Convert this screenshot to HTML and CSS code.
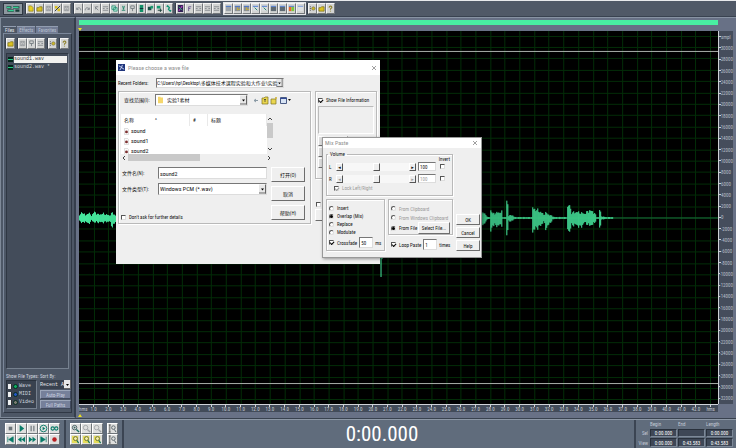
FILE: index.html
```html
<!DOCTYPE html>
<html lang="en">
<head>
<meta charset="utf-8">
<title>Wave editor</title>
<link rel="stylesheet" href="styles.css">
</head>
<body>
<svg class="defs" aria-hidden="true">
  <symbol id="wave" viewBox="0 0 18 10"><path d="M1 3h6M9 3h8M2 7h8M12 7h5" stroke="#163c36" stroke-width="3"/><path d="M1 3h5M9 3h7M3 7h7" stroke="#35cf92" stroke-width="1.5"/></symbol>
  <symbol id="new" viewBox="0 0 8 8"><path d="M2 1h3l2 2v4H2z" fill="#e6cf26" stroke="#8a7a10" stroke-width=".7"/></symbol>
  <symbol id="open" viewBox="0 0 8 8"><path d="M1 3h2l1-1h3v5H1z" fill="#d9c022" stroke="#6d6212" stroke-width=".7"/></symbol>
  <symbol id="save" viewBox="0 0 8 8"><path d="M1.5 1.5h5v5h-5zM3 1.5v2h2v-2M3 6.500v-1.500h2v1.500" fill="none" stroke="#8b8f93" stroke-width=".8"/></symbol>
  <symbol id="saveas" viewBox="0 0 8 8"><path d="M1 1h3v3H1zM4 4h3v3H4z" fill="#d9c022"/><path d="M1 7l6-6" stroke="#222b33"/></symbol>
  <symbol id="undo" viewBox="0 0 8 8"><path d="M2 3v2h2M2 5c1-3 5-2 4.500 1" fill="none" stroke="#777e85"/></symbol>
  <symbol id="redo" viewBox="0 0 8 8"><path d="M6 3v2H4M6 5C5 2 1 3 1.500 6" fill="none" stroke="#777e85"/></symbol>
  <symbol id="cutg" viewBox="0 0 8 8"><path d="M2 2l4 4M6 2h-3v3" fill="none" stroke="#7b8187"/></symbol>
  <symbol id="repeat" viewBox="0 0 8 8"><path d="M1 2h6M1 4h2M5 4h2M1 6h6" stroke="#81878b"/></symbol>
  <symbol id="copy" viewBox="0 0 8 8"><path d="M1 1h4v4H1zM3 3h4v4H3z" fill="#b8e8d4" stroke="#16876b" stroke-width=".8"/></symbol>
  <symbol id="cut" viewBox="0 0 8 8"><path d="M3 1l1 4M5 1L4 5M2 6h4" stroke="#168064"/></symbol>
  <symbol id="paste" viewBox="0 0 8 8"><path d="M2 1h4v3H2zM4 4v3" fill="none" stroke="#747c80"/></symbol>
  <symbol id="mix" viewBox="0 0 8 8"><path d="M2 0h4v8H2z" fill="#149168"/><path d="M2 4h4" stroke="#123"/></symbol>
  <symbol id="trim" viewBox="0 0 8 8"><path d="M1 2h4v4H1z" fill="#1a5047"/><path d="M4 1h3v3H4z" fill="#1a9b70"/></symbol>
  <symbol id="convert" viewBox="0 0 8 8"><path d="M1 1h4v3H1z" fill="#159a70"/><path d="M2 6h5M5 4v4" stroke="#173b34"/></symbol>
  <symbol id="link" viewBox="0 0 8 8"><path d="M2 2l1-1 2 2-1 2 2 2 1-1" fill="none" stroke="#119173" stroke-width="1.500"/></symbol>
  <symbol id="spectral" viewBox="0 0 8 8"><path d="M1 0h6v8H1z" fill="#342057"/><path d="M2 7l4-6" stroke="#e24ae2"/><path d="M2 2l4 4" stroke="#28b670"/></symbol>
  <symbol id="fx" viewBox="0 0 8 8"><path d="M3 7V2h3M3 4h2" fill="none" stroke="#6b568e"/></symbol>
  <symbol id="win" viewBox="0 0 8 8"><path d="M1 1h6v6H1z" fill="#9da3a9"/><path d="M1 1.500h6" stroke="#3b6fd2"/></symbol>
  <symbol id="winy" viewBox="0 0 8 8"><path d="M1 1h6v6H1z" fill="#8b9097"/><path d="M1 1.500h6" stroke="#3b6fd2"/><path d="M4 3v3M5 5h2" stroke="#c9b12a"/></symbol>
  <symbol id="wing" viewBox="0 0 8 8"><path d="M1 1h6v6H1z" fill="#d9dcdf"/><path d="M1 1.500h6" stroke="#3b6fd2"/><path d="M3 3l3 3" stroke="#168064"/></symbol>
  <symbol id="wink" viewBox="0 0 8 8"><path d="M1 2h6v5H1z" fill="#5f6a73"/><path d="M1 1.500h6" stroke="#3b6fd2"/></symbol>
  <symbol id="winc" viewBox="0 0 8 8"><path d="M1 2h3v5H1z" fill="#e8662c"/><path d="M4 2h3v5H4z" fill="#7cc93c"/><path d="M1 1.500h6" stroke="#3b6fd2"/></symbol>
  <symbol id="blank" viewBox="0 0 8 8"><path d="M1 1h6v6H1z" fill="#dfe1e3"/><path d="M1 1.500h6" stroke="#6f94da"/></symbol>
  <symbol id="opts" viewBox="0 0 8 8"><path d="M1 2h1M1 4h1M1 6h1" stroke="#333"/><circle cx="5" cy="4" r="2" fill="#c9b62b" stroke="#555" stroke-width=".5"/></symbol>
  <symbol id="help" viewBox="0 0 8 8"><path d="M2.500 3c0-2.500 3.500-2 3 0L4 4.500v1M4 6.500v1" fill="none" stroke="#8f812a" stroke-width="1.200"/></symbol>
  <symbol id="stop" viewBox="0 0 10 10"><path d="M3 3h4v4H3z" fill="#6b7478"/></symbol>
  <symbol id="play" viewBox="0 0 10 10"><path d="M3 1v8l5-4z" fill="#087b68"/></symbol>
  <symbol id="pause" viewBox="0 0 10 10"><path d="M3.500 2v6M6.500 2v6" stroke="#7b8388" stroke-width="1.500"/></symbol>
  <symbol id="playall" viewBox="0 0 10 10"><circle cx="5" cy="5" r="3.700" fill="none" stroke="#087b68"/><path d="M4 3v4l3-2z" fill="#087b68"/></symbol>
  <symbol id="loop" viewBox="0 0 10 10"><circle cx="3" cy="5" r="1.800" fill="none" stroke="#087b68" stroke-width="1.200"/><circle cx="7" cy="5" r="1.800" fill="none" stroke="#087b68" stroke-width="1.200"/></symbol>
  <symbol id="first" viewBox="0 0 10 10"><path d="M2 2v6M8 2v6L3 5z" fill="#087b68" stroke="#087b68" stroke-width=".8"/></symbol>
  <symbol id="rew" viewBox="0 0 10 10"><path d="M5 2v6L1 5zM9 2v6L5 5z" fill="#087b68"/></symbol>
  <symbol id="fwd" viewBox="0 0 10 10"><path d="M1 2v6l4-3zM5 2v6l4-3z" fill="#087b68"/></symbol>
  <symbol id="last" viewBox="0 0 10 10"><path d="M8 2v6M2 2v6l5-3z" fill="#087b68" stroke="#087b68" stroke-width=".8"/></symbol>
  <symbol id="rec" viewBox="0 0 10 10"><circle cx="5" cy="5" r="2.500" fill="#b91f22"/></symbol>
  <symbol id="zoomin" viewBox="0 0 10 10"><circle cx="4" cy="4" r="2.500" fill="#c8e4e0" stroke="#4f5a60"/><path d="M6 6l3 3" stroke="#14705d" stroke-width="1.500"/><path d="M3 4h2M4 3v2" stroke="#333" stroke-width=".7"/></symbol>
  <symbol id="zoomoff" viewBox="0 0 10 10"><circle cx="4" cy="4" r="2.500" fill="none" stroke="#a0a4a7"/><path d="M6 6l3 3" stroke="#a0a4a7" stroke-width="1.500"/></symbol>
  <symbol id="zoomsel" viewBox="0 0 10 10"><path d="M1 1h7v8H1z" fill="#e5dd59"/><circle cx="5" cy="4" r="2.200" fill="#f5f0a6" stroke="#65682c"/><path d="M6.500 6l2 3" stroke="#14705d" stroke-width="1.300"/></symbol>
  <symbol id="zoomv" viewBox="0 0 10 10"><path d="M2 1v8M1 1h2M1 9h2" stroke="#333" stroke-width=".8"/><circle cx="6" cy="4" r="2" fill="none" stroke="#59646a"/><path d="M7 6l2 3" stroke="#4b5960"/></symbol>
  <symbol id="file" viewBox="0 0 6 8"><path d="M.5.5h4l1 1v6h-5z" fill="#fff" stroke="#aaa" stroke-width=".5"/><circle cx="3" cy="4.500" r="1.700" fill="#7d3131"/></symbol>
</svg>

<div class="app">
  <header class="toolbar">
    <span class="brand"><svg><use href="#wave"/></svg></span>
    <div class="tools"><button aria-label="New"><svg><use href="#new"/></svg></button><button aria-label="Open"><svg><use href="#open"/></svg></button><button aria-label="Save"><svg><use href="#save"/></svg></button><button aria-label="Save as"><svg><use href="#saveas"/></svg></button><button aria-label="Save copy"><svg><use href="#save"/></svg></button></div>
    <div class="tools"><button aria-label="Undo"><svg><use href="#undo"/></svg></button><button aria-label="Redo"><svg><use href="#redo"/></svg></button><button aria-label="Clear"><svg><use href="#cutg"/></svg></button><button aria-label="Repeat"><svg><use href="#repeat"/></svg></button><button aria-label="Copy"><svg><use href="#copy"/></svg></button><button aria-label="Cut"><svg><use href="#cut"/></svg></button><button aria-label="Paste"><svg><use href="#paste"/></svg></button><button aria-label="Mix"><svg><use href="#mix"/></svg></button><button aria-label="Trim"><svg><use href="#trim"/></svg></button><button aria-label="Convert"><svg><use href="#convert"/></svg></button><button aria-label="Link"><svg><use href="#link"/></svg></button></div>
    <div class="tools"><button aria-label="Spectral view"><svg><use href="#spectral"/></svg></button><button aria-label="Effect"><svg><use href="#fx"/></svg></button><button aria-label="Cue list"><svg><use href="#repeat"/></svg></button><button aria-label="Play list"><svg><use href="#repeat"/></svg></button><button aria-label="Info"><svg><use href="#repeat"/></svg></button></div>
    <div class="tools framed"><button aria-label="Organizer"><svg><use href="#win"/></svg></button><button aria-label="Levels"><svg><use href="#winy"/></svg></button><button aria-label="Frequency"><svg><use href="#winy"/></svg></button><button aria-label="Transport"><svg><use href="#wing"/></svg></button><button aria-label="Zoom"><svg><use href="#wing"/></svg></button><button aria-label="Time"><svg><use href="#wink"/></svg></button><button aria-label="Meters"><svg><use href="#wink"/></svg></button><button aria-label="Colours"><svg><use href="#winc"/></svg></button><button aria-label="Blank"><svg><use href="#blank"/></svg></button></div>
    <div class="tools"><button aria-label="Settings"><svg><use href="#opts"/></svg></button><button aria-label="Scripts"><svg><use href="#open"/></svg></button><button aria-label="Help"><svg><use href="#help"/></svg></button></div>
  </header>

  <div class="workspace">
    <aside class="organizer">
      <nav class="tabs"><button class="on">Files</button><button>Effects</button><button>Favorites</button></nav>
      <div class="panel">
        <div class="paneltools">
          <div class="tools"><button aria-label="Open file"><svg><use href="#open"/></svg></button></div>
          <div class="tools"><button aria-label="Close file"><svg><use href="#save"/></svg></button><button aria-label="Insert"><svg><use href="#paste"/></svg></button><button aria-label="Edit"><svg><use href="#repeat"/></svg></button></div>
          <div class="tools"><button aria-label="Options"><svg><use href="#opts"/></svg></button></div>
          <div class="tools"><button aria-label="Panel help"><svg><use href="#help"/></svg></button></div>
        </div>
        <ul class="files">
          <li><i></i><span class="sel">sound1.wav</span></li>
          <li><i></i><span>sound2.wav *</span></li>
        </ul>
        <div class="filters">
          <div class="col">
            <span class="cap">Show File Types:</span>
            <div class="types">
              <label><input type="checkbox" checked><i class="dot"></i>Wave</label>
              <label><input type="checkbox" checked><i class="dot midi"></i>MIDI</label>
              <label><input type="checkbox" checked><i class="dot video"></i>Video</label>
            </div>
          </div>
          <div class="col">
            <label class="cap" for="sort">Sort By:</label>
            <select id="sort"><option>Recent Acc</option></select>
            <button class="flat">Auto-Play</button>
            <button class="flat">Full Paths</button>
          </div>
        </div>
      </div>
    </aside>

    <main class="editor">
      <div class="overview"></div>
      <div class="cue"><i></i></div>
      <div class="canvas">
        <svg id="plot" viewBox="0 0 640 374" preserveAspectRatio="none"></svg>
        <div class="levels" id="levels"></div>
      </div>
      <div class="times" id="times"></div>
      <div class="cue foot"><i></i></div>
    </main>
  </div>

  <footer class="bottom">
    <div class="pad transport">
      <button aria-label="Stop"><svg><use href="#stop"/></svg></button><button aria-label="Play"><svg><use href="#play"/></svg></button><button aria-label="Pause"><svg><use href="#pause"/></svg></button><button aria-label="Play to end"><svg><use href="#playall"/></svg></button><button aria-label="Loop"><svg><use href="#loop"/></svg></button>
      <button aria-label="Go to start"><svg><use href="#first"/></svg></button><button aria-label="Rewind"><svg><use href="#rew"/></svg></button><button aria-label="Fast forward"><svg><use href="#fwd"/></svg></button><button aria-label="Go to end"><svg><use href="#last"/></svg></button><button aria-label="Record"><svg><use href="#rec"/></svg></button>
    </div>
    <div class="zooms">
      <div class="pad three">
        <button aria-label="Zoom in"><svg><use href="#zoomin"/></svg></button><button aria-label="Zoom out"><svg><use href="#zoomoff"/></svg></button><button aria-label="Zoom full"><svg><use href="#zoomoff"/></svg></button>
        <button aria-label="Zoom selection"><svg><use href="#zoomsel"/></svg></button><button aria-label="Zoom left"><svg><use href="#zoomsel"/></svg></button><button aria-label="Zoom right"><svg><use href="#zoomsel"/></svg></button>
      </div>
      <div class="pad one"><button aria-label="Vertical zoom in"><svg><use href="#zoomv"/></svg></button><button aria-label="Vertical zoom out"><svg><use href="#zoomv"/></svg></button></div>
    </div>
    <div class="clock">0:00.000</div>
    <table class="range">
      <tr><th></th><th>Begin</th><th>End</th><th>Length</th></tr>
      <tr><th>Sel</th><td>0:00.000</td><td></td><td>0:00.000</td></tr>
      <tr><th>View</th><td>0:00.000</td><td>0:43.583</td><td>0:43.583</td></tr>
    </table>
  </footer>
</div>

<section class="window chooser">
  <header><svg class="appicon" viewBox="0 0 8 8"><path d="M0 0h8v8H0z" fill="#20357c"/><path d="M1 2l3 2-2 3M5 1l-1 3 3 2" fill="none" stroke="#dfe8ff"/></svg><h2>Please choose a wave file</h2><button class="close" aria-label="Close chooser"><svg viewBox="0 0 6 6"><path d="M1 1l4 4M5 1L1 5" stroke="#888" stroke-width=".8"/></svg></button></header>
  <div class="content">
    <div class="recent"><label for="recent">Recent Folders:</label><select id="recent"><option>C:\Users\hp\Desktop\多媒体技术课程实验和大作业\实验</option></select></div>
    <div class="cols">
      <div class="group pick">
        <div class="lookin"><label for="look">查找范围(I):</label>
          <div class="folderbox"><svg viewBox="0 0 6 8"><path d="M0 0h3v1h3v7H0z" fill="#f5d66b"/></svg><select id="look"><option>实验1素材</option></select></div>
          <svg class="navicons" viewBox="0 0 38 9"><path d="M1 4.500h4M3 3L1 4.500 3 6" fill="none" stroke="#8a9aa5"/><path d="M9 2h2l1-1h3v7H9z" fill="#ead64f" stroke="#807320" stroke-width=".7"/><path d="M12 3v3M11 4l1-1 1 1" fill="none" stroke="#333" stroke-width=".7"/><path d="M18 3h5v5h-5z" fill="#ead64f" stroke="#807320" stroke-width=".7"/><path d="M22 1l2 2M24 1l-2 2" stroke="#caa820" stroke-width=".7"/><path d="M27.500 1.500h6v6h-6z" fill="#d8e4f4" stroke="#4a5b84"/><path d="M27 2.500h7" stroke="#334b96"/><path d="M35 3h3l-1.500 2z" fill="#111"/></svg>
        </div>
        <div class="listing">
          <div class="scrollarea">
            <table><tr><th>名称<b>^</b></th><th>#</th><th>标题</th></tr>
              <tr><td><svg><use href="#file"/></svg>sound</td><td></td><td></td></tr>
              <tr><td><svg><use href="#file"/></svg>sound1</td><td></td><td></td></tr>
              <tr><td><svg><use href="#file"/></svg>sound2</td><td></td><td></td></tr></table>
            <div class="vbar"><svg viewBox="0 0 6 4"><path d="M1 3l2-2 2 2" fill="none" stroke="#444"/></svg><i></i><svg class="dn" viewBox="0 0 6 4"><path d="M1 1l2 2 2-2" fill="none" stroke="#444"/></svg></div>
          </div>
          <div class="hbar"><svg viewBox="0 0 4 6"><path d="M3 1L1 3l2 2" fill="none" stroke="#444"/></svg><i></i><svg viewBox="0 0 4 6"><path d="M1 1l2 2-2 2" fill="none" stroke="#444"/></svg></div>
        </div>
        <div class="entry">
          <div class="fields">
            <div><label for="fname">文件名(N):</label><input id="fname" type="text" value="sound2"></div>
            <div><label for="ftype">文件类型(T):</label><select id="ftype"><option>Windows PCM (*.wav)</option></select></div>
            <label class="check ask"><input type="checkbox">Don't ask for further details</label>
          </div>
          <div class="actions"><button class="btn">打开(O)</button><button class="btn">取消</button><button class="btn">帮助(H)</button></div>
        </div>
      </div>
      <div class="side">
        <div class="group info"><label class="check"><input type="checkbox" checked>Show File Information</label><div class="sunken"></div><button class="btn" aria-label="Play"></button><button class="btn" aria-label="Stop"></button><button class="btn" aria-label="Loop"></button></div>
        <label class="check auto"><input type="checkbox" aria-label="Auto play"></label>
        <button class="btn" aria-label="Preview"></button>
      </div>
    </div>
  </div>
</section>

<section class="window mix">
  <header><h2>Mix Paste</h2><button class="close" aria-label="Close mix"><svg viewBox="0 0 6 6"><path d="M1 1l4 4M5 1L1 5" stroke="#888" stroke-width=".8"/></svg></button></header>
  <div class="mixbody">
    <div class="settings">
      <fieldset class="group volume"><legend>Volume</legend>
        <span class="invert">Invert</span>
        <div class="vol"><label for="vl">L</label><div class="slider"><button aria-label="Left down">◂</button><input type="range" aria-label="Left volume"><button aria-label="Left up">▸</button></div><input id="vl" type="text" value="100"><input type="checkbox" aria-label="Invert left"></div>
        <div class="vol"><label for="vr">R</label><div class="slider off"><button aria-label="Right down">◂</button><input type="range" aria-label="Right volume"><button aria-label="Right up">▸</button></div><input id="vr" class="off" type="text" value="100"><input type="checkbox" aria-label="Invert right"></div>
        <label class="check off"><input type="checkbox" checked disabled>Lock Left/Right</label>
      </fieldset>
      <div class="lower">
        <div class="group modes">
          <label class="check"><input type="radio" name="mode">Insert</label>
          <label class="check"><input type="radio" name="mode" checked>Overlap (Mix)</label>
          <label class="check"><input type="radio" name="mode">Replace</label>
          <label class="check"><input type="radio" name="mode">Modulate</label>
          <div class="fade"><label class="check"><input type="checkbox" checked>Crossfade</label><input type="text" value="50" aria-label="Crossfade time"><span>ms</span></div>
        </div>
        <div class="from">
          <div class="group sources">
            <label class="check off"><input type="radio" name="src" disabled>From Clipboard</label>
            <label class="check off"><input type="radio" name="src" disabled>From Windows Clipboard</label>
            <div class="fromfile"><label class="check"><input type="radio" name="src" checked>From File</label><button class="btn">Select File...</button></div>
          </div>
          <div class="fade"><label class="check"><input type="checkbox" checked>Loop Paste</label><input type="text" value="1" aria-label="Loop count"><span>times</span></div>
        </div>
      </div>
    </div>
    <div class="mixactions"><button class="btn">OK</button><button class="btn">Cancel</button><button class="btn">Help</button></div>
  </div>
</section>
<script src="script.js"></script>
</body>
</html>
```
FILE: styles.css
```css
* { box-sizing: border-box; }
body { margin: 0; font: 5px/6px "Liberation Sans Narrow", "Roboto Condensed", "Liberation Sans", "Noto Sans CJK SC", sans-serif; color: #111; background: #4f5865; }
button, input, select { font: inherit; color: inherit; margin: 0; padding: 0; border: 0; border-radius: 0; background: none; min-width: 0; }
svg { display: block; }
.defs { position: absolute; width: 0; height: 0; }
.app { display: flex; flex-direction: column; height: 100vh; }

.toolbar { display: flex; align-items: center; gap: 3px; height: 17px; padding: 0 3px; border-top: 1px solid #e8eaec; border-bottom: 1px solid #394250; background: #505967; }
.brand { width: 20px; height: 12px; padding: 1px; border: 1px solid #2f3842; background: #8d979f; }
.brand svg { width: 100%; height: 100%; }
.tools { display: flex; box-shadow: -1px 0 #363e4a; }
.tools button { width: 9px; height: 11px; padding: 1px 0; background: #d3d4d3; border: 1px solid; border-color: #f4f4f4 #73777b #73777b #f4f4f4; }
.framed { box-shadow: 0 0 0 1px #e3e5e8; }
.tools svg { width: 7px; height: 7px; }

.workspace { display: flex; flex: 1; min-height: 0; border-bottom: 1px solid #38414e; }
.organizer { display: flex; flex-direction: column; width: 76px; padding: 8px 2px 4px; border: 1px solid #7e8998; border-right: 2px solid #353e4c; background: #4d5766; }
.tabs { display: flex; gap: 1px; }
.tabs button { height: 7px; padding: 0 2px; color: #b9c2d0; background: #717b93; border-top: 1px solid #929db0; }
.tabs .on { color: #e5e9ef; background: #4d5766; }
.panel { display: flex; flex-direction: column; flex: 1; padding: 4px 2px 3px; border: 1px solid #7b879a; border-right-color: #303845; border-bottom-color: #303845; }
.paneltools { display: flex; gap: 3px; margin-bottom: 4px; }
.files { flex: 1; list-style: none; margin: 0; padding: 1px; border: 1px solid; border-color: #2f3743 #76818f #76818f #2f3743; background: #434c5a; color: #d5d9de; font: 5px/7px "Liberation Mono", monospace; }
.files li { display: flex; align-items: center; gap: 1px; height: 8px; }
.files i { width: 5px; height: 5px; background: linear-gradient(#06261d 40%, #27c781 40% 60%, #06261d 60%); }
.files span { flex: 1; }
.files .sel { background: #f1f1ef; color: #333; }
.filters { display: flex; gap: 3px; color: #ced5df; padding-top: 4px; }
.col { display: flex; flex-direction: column; gap: 1px; width: 31px; }
.cap { display: block; height: 6px; white-space: nowrap; }
.types { height: 29px; padding: 1px; border: 1px solid; border-color: #29313c #76818f #76818f #29313c; background: #39424f; }
.types label { display: flex; align-items: center; gap: 1px; height: 8px; font-family: "Liberation Mono", monospace; }
.types input { appearance: none; width: 4px; height: 5px; background: #eef0f1; border-right: 1px solid #333; }
.dot { width: 5px; height: 5px; border-radius: 50%; background: #0fae60; border: 1px solid #082f22; }
.midi { background: #2355c4; }
.video { background: #7c7c74; }
select { appearance: none; background: #fff url("data:image/svg+xml,%3Csvg xmlns='http://www.w3.org/2000/svg' viewBox='0 0 7 9'%3E%3Cpath d='M0 0h7v9H0z' fill='%23e8e8e8'/%3E%3Cpath d='M6.500 0v9M0 8.500h7' stroke='%23666'/%3E%3Cpath d='M2 4h3L3.500 6z'/%3E%3C/svg%3E") right center / 7px 100% no-repeat; }
#sort { height: 9px; color: #e7eaee; padding-right: 7px; background-color: #39424f; font-family: "Liberation Mono", monospace; }
.flat { height: 9px; color: #ccd2e0; background: #76809a; border: 1px solid; border-color: #9ca6ba #414a5e #414a5e #9ca6ba; line-height: 6px; }

.editor { display: flex; flex-direction: column; flex: 1; min-width: 0; padding: 2px 3px 0; background: #687186; border-top: 1px solid #8893a3; }
.overview { height: 5px; margin-right: 15px; background: #49efa2; }
.cue { height: 6px; display: flex; align-items: end; }
.cue i { border: 2px solid transparent; border-top: 3px solid #ece01e; border-bottom: 0; margin-left: -1px; }
.canvas { display: flex; flex: 1; min-height: 0; }
#plot { flex: 1; min-width: 0; height: 100%; background: #000; }
.levels { display: flex; flex-direction: column; width: 15px; background: #454d5c; border-left: 1px solid #cdd1d6; color: #b8bec8; }
.levels span { flex: 1; display: flex; align-items: center; min-height: 0; }
.levels span::before { content: ""; width: 2px; height: 1px; background: #cdd1d6; }
.times { display: grid; height: 8px; margin-right: 15px; grid-template-columns: 1fr repeat(42, 2fr) 2fr; background: #424b59; border-top: 1px solid #cfd3d8; color: #c6cbd3; text-align: center; }
.times span { min-width: 0; padding-top: 1px; background: linear-gradient(#cfd3d8, #cfd3d8) center top / 1px 2px no-repeat; }
.times span:first-child { background: none; }
.foot { align-items: center; }
.foot i { border-top: 0; border-bottom: 3px solid #ece01e; }

.bottom { display: flex; height: 29px; border-top: 1px solid #8d98a6; background: #606c7c; }
.pad { display: grid; grid-template-columns: repeat(5, 11px); grid-auto-rows: 11px; }
.pad button { padding: 0; border: 1px solid; border-color: #fff #6e7478 #6e7478 #fff; background: #dedfde; }
.pad svg { width: 9px; height: 9px; }
.transport { padding: 3px 4px 0 5px; }
.zooms { display: flex; gap: 4px; padding: 3px 4px 0; border: solid #3b4452; border-width: 0 2px; }
.three { grid-template-columns: repeat(3, 11px); }
.one { grid-template-columns: 11px; }
.clock { flex: 1; padding-left: 6px; text-align: center; color: #fff; font-size: 21px; line-height: 28px; }
.range { border-spacing: 1px; border-left: 2px solid #3b4452; color: #fff; margin-right: 2px; }
.range th { padding: 0; color: #c0c8d4; font-weight: 400; text-align: left; height: 6px; }
.range th:first-child { width: 12px; text-align: right; padding-right: 1px; }
.range td { width: 27px; height: 8px; padding: 0; text-align: center; background: #3e4756; border: 1px solid; border-color: #29313c #7d8998 #7d8998 #29313c; }

.window { position: absolute; background: #efefef; white-space: nowrap; }
.window header { display: flex; align-items: center; gap: 3px; background: #fff; color: #909090; }
.window h2 { flex: 1; margin: 0; font-weight: 400; font-size: 6px; }
.close svg { width: 6px; height: 6px; }
.group { border: 1px solid #b9b9b9; box-shadow: inset 1px 1px #fff, 1px 1px #fff; margin: 0; padding: 0; }
.btn { background: #efefef; border: 1px solid; border-color: #fff #6d6d6d #6d6d6d #fff; text-align: center; }
.check { display: flex; align-items: center; gap: 3px; }
.window input[type=checkbox], .window input[type=radio] { appearance: none; flex: none; width: 5px; height: 5px; background: #fff; border: 1px solid; border-color: #555 #ddd #ddd #555; display: grid; place-items: center; }
.window input[type=radio] { border-radius: 50%; }
.window input[type=radio]:checked::before { content: ""; width: 3px; height: 3px; border-radius: 50%; background: #000; }
.window input[type=checkbox]:checked::before { content: ""; width: 3px; height: 2px; border: solid #000; border-width: 0 0 1px 1px; transform: rotate(-45deg); }
.window input[type=checkbox]:disabled::before { border-color: #999; }
.window input[type=text], .chooser select { background-color: #fff; border: 1px solid; border-color: #777 #ddd #ddd #777; padding: 0 1px; }
.off { color: #9b9b9b; }

.chooser { left: 116px; top: 60px; width: 264px; height: 204px; }
.chooser header { height: 15px; padding: 0 3px 0 2px; }
.appicon { width: 7px; height: 7px; }
.content { padding: 3px 2px; }
.recent { display: flex; align-items: center; }
.recent label { width: 38px; }
.recent select { width: 128px; height: 10px; padding: 0; }
.cols { display: flex; gap: 4px; margin-top: 3px; }
.pick { width: 193px; height: 133px; padding: 2px 1px; }
.lookin { display: flex; align-items: center; height: 12px; }
.lookin label { width: 34px; padding-left: 3px; margin-left: 1px; }
.lookin .folderbox { width: 93px; }
.folderbox { display: flex; align-items: center; gap: 3px; height: 12px; background: #fff; border: 1px solid; border-color: #777 #ddd #ddd #777; padding-left: 2px; }
.folderbox svg { width: 5px; height: 8px; }
.folderbox select { flex: 1; height: 10px; border: 0; }
.navicons { width: 38px; height: 9px; margin-left: 5px; }
.listing { margin: 8px 0 0 1px; width: 152px; }
.scrollarea { display: flex; height: 40px; overflow: hidden; }
.scrollarea table { flex: 1; height: 42px; border-spacing: 0; background: #fff; table-layout: fixed; font-size: 6px; }
.scrollarea th { height: 12px; padding: 0 3px; font-weight: 400; font-size: 5px; text-align: left; border-right: 1px solid #e9e9e9; }
.scrollarea th:first-child { width: 69px; }
.scrollarea th:nth-child(2) { width: 18px; }
.scrollarea b { font-weight: 400; padding-left: 21px; vertical-align: top; }
.scrollarea td { height: 10px; padding: 0 3px; }
.scrollarea td svg { display: inline-block; width: 5px; height: 7px; margin-right: 2px; vertical-align: middle; }
.vbar { display: flex; flex-direction: column; gap: 2px; width: 6px; padding: 3px 0; }
.vbar i { width: 6px; height: 15px; background: #c9c9c9; }
.vbar svg { width: 6px; height: 4px; }
.dn { margin-top: auto; }
.hbar { display: flex; align-items: center; gap: 2px; height: 7px; padding: 0 2px 0 1px; }
.hbar svg { width: 4px; height: 6px; }
.hbar i { width: 72px; height: 7px; margin-right: auto; background: #c9c9c9; }
.entry { display: flex; justify-content: space-between; margin-top: 6px; padding-right: 4px; }
.fields { display: flex; flex-direction: column; gap: 4px; padding-left: 1px; width: 147px; }
.fields div { display: flex; align-items: center; }
.fields div label { width: 37px; padding-left: 1px; }
.fields div input, .fields div select { flex: 1; height: 12px; font-size: 6px; }
.ask { margin-top: auto; }
.actions { display: grid; gap: 4px; width: 34px; grid-auto-rows: 15px; }
.side { width: 62px; }
.info { height: 88px; padding: 5px 2px; }
.info .sunken { height: 28px; margin: 3px 0 2px; border: 1px solid; border-color: #bbb #fff #fff #bbb; }
.info .btn { display: block; width: 30px; height: 10px; margin-bottom: 1px; background: #ddd; }
.auto { margin: 23px 0 2px 1px; }
.side > .btn { display: block; width: 30px; height: 12px; }

.mix { left: 323px; top: 138px; width: 158px; height: 119px; box-shadow: 0 0 0 1px #999, 1px 1px 3px 1px #0006; }
.mix header { height: 10px; padding: 0 3px 0 2px; }
.mixbody { display: flex; justify-content: space-between; padding: 3px 1px 0 3px; }
.settings { width: 127px; }
.volume { position: relative; height: 45px; padding: 3px 3px 0 6px; }
.volume legend { padding: 0 2px; margin-left: -5px; }
.invert { position: absolute; right: 2px; top: -1px; }
.vol { display: flex; align-items: center; gap: 2px; height: 12px; padding-top: 1px; }
.vol > label { width: 4px; margin-left: -4px; flex: none; }
.slider { display: flex; flex: 1; margin-left: 1px; background: #e6e6e6; }
.slider button { width: 7px; height: 8px; line-height: 6px; background: #eee; border: 1px solid; border-color: #fff #555 #555 #fff; font-family: "DejaVu Sans"; }
.slider input { appearance: none; flex: 1; width: 0; background: #f7f7f7; }
.slider input::-webkit-slider-thumb { appearance: none; width: 7px; height: 8px; background: #eee; border: 1px solid; border-color: #fff #555 #555 #fff; }
.vol > input[type=text] { width: 18px; height: 9px; }
.vol > input[type=checkbox] { margin: 0 4px 0 2px; }
.volume > .check { margin-top: 1px; margin-left: 1px; }
.lower { display: flex; gap: 3px; margin-top: 3px; }
.modes { width: 59px; padding: 4px 2px 2px; }
.modes .check { height: 8px; }
.fade { display: flex; align-items: center; gap: 2px; }
.fade input[type=text] { width: 14px; height: 11px; }
.modes .fade { margin-top: 1px; }
.from { flex: 1; }
.sources { height: 36px; padding: 4px 2px 0; }
.sources .check { height: 9px; }
.fromfile { display: flex; justify-content: space-between; align-items: center; }
.fromfile .btn { width: 32px; height: 12px; }
.from > .fade { margin: 4px 0 0 3px; }
.mixactions { display: grid; align-content: end; gap: 2px; width: 24px; grid-auto-rows: 11px; }
```
FILE: script.js
```js
// Time and level rulers
const span = t => `<span>${t}</span>`;
let times = span("hms");
for (let i = 1; i <= 42; i++) times += span(i.toFixed(1));
document.getElementById("times").innerHTML = times + span("hms");
let levels = span("smpl");
for (let v = 30000; v >= -32000; v -= 2000) levels += span(v);
document.getElementById("levels").innerHTML = levels;

// Grid and waveform envelope: [x, up, down] around the centre line
const env = [[0,3,3],[3,7,6],[6,3,4],[9,6,7],[12,3,3],[15,7,5],[19,4,5],[24,5,5],[30,3,4],[33,6,10],[36,3,5],[40,2,2],[298,2,3],[302,5,54],[303,5,54],[305,2,2],[400,4,4],[403,6,8],[406,5,6],[409,1,1],[411,1,1],[412,9,16],[414,5,8],[418,6,9],[423,7,8],[424,1,1],[427,1,1],[428,18,18],[429,16,14],[430,3,4],[434,3,3],[436,1,1],[453,1,1],[454,11,15],[457,10,12],[462,7,9],[465,4,4],[467,6,12],[470,4,8],[474,2,2],[476,1,1],[488,1,1],[489,12,12],[491,15,16],[493,6,8],[498,7,8],[502,6,11],[506,5,5],[511,9,9],[516,6,6],[518,1,1],[520,1,1],[521,10,12],[523,2,2],[527,1,1],[534,1,1]];
const NS = "http://www.w3.org/2000/svg", plot = document.getElementById("plot");
const path = (d, stroke) => {
  const p = document.createElementNS(NS, "path");
  p.setAttribute("d", d);
  p.setAttribute("stroke", stroke);
  p.setAttribute("fill", "none");
  plot.append(p);
};
let grid = "";
for (let i = 1; i < 44; i++) grid += `M${Math.round(i * 14.7) + 0.5} 0V374`;
for (let i = -16; i <= 16; i++) grid += `M0 ${Math.round(187 + i * 11.4) + 0.5}H640`;
path(grid, "#032d08");
path("M0 20.5H640M0 353.5H640", "#a9b0aa");
path("M534 187.500H640", "#18703c");
let wave = "";
for (let x = 0; x <= 534; x++) {
  const k = Math.max(1, env.findIndex(e => e[0] >= x));
  const [a, b] = [env[k - 1], env[k]];
  const t = (x - a[0]) / (b[0] - a[0]);
  const j = 0.85 + 0.25 * Math.sin(x * 2.7) * Math.cos(x * 1.3);
  const up = (a[1] + (b[1] - a[1]) * t) * j, dn = (a[2] + (b[2] - a[2]) * t) * j;
  wave += `M${x + 0.5} ${187.5 - up}V${187.5 + dn}`;
}
path(wave, "#47eaa0");
```
